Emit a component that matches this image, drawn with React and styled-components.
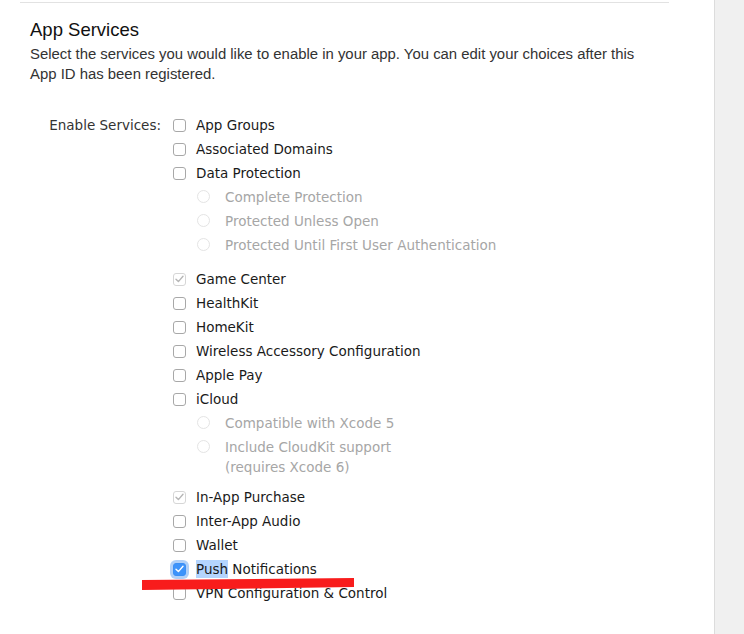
import React from "react";
import styled, { createGlobalStyle } from "styled-components";

const GlobalStyle = createGlobalStyle`
  html, body {
    margin: 0;
    padding: 0;
    background: #ffffff;
  }
`;

const Page = styled.div`
  position: relative;
  display: flex;
  width: 744px;
  height: 634px;
  overflow: hidden;
`;

const Main = styled.div`
  width: 715px;
  flex-shrink: 0;
  border-right: 1px solid #dcdcdc;
  padding-top: 2px;
  box-sizing: border-box;
`;

const Sidebar = styled.div`
  flex: 1;
  background: #f0f0f0;
`;

const Rule = styled.div`
  margin-left: 20px;
  width: 649px;
  border-top: 1px solid #e2e2e2;
`;

const Section = styled.section`
  padding-left: 30px;
  padding-top: 14px;
`;

const Heading = styled.h2`
  margin: 0;
  font-family: "Liberation Sans", Arial, sans-serif;
  font-weight: normal;
  font-size: 18.5px;
  line-height: 26px;
  color: #111;
`;

const Description = styled.p`
  margin: 1px 0 0;
  width: 616px;
  font-family: "Liberation Sans", Arial, sans-serif;
  font-size: 14.9px;
  line-height: 20px;
  color: #333;
`;

const Form = styled.div`
  display: grid;
  grid-template-columns: 131px 1fr;
  column-gap: 12px;
  margin-top: 29px;
  font-family: "DejaVu Sans", "Lucida Grande", sans-serif;
  font-size: 13.5px;
`;

const FieldLabel = styled.div`
  text-align: right;
  height: 24px;
  line-height: 24px;
  color: #333;
`;

const Options = styled.div`
  display: flex;
  flex-direction: column;
`;

const Row = styled.label`
  display: flex;
  align-items: center;
  gap: 10px;
  height: 24px;
  color: #1a1a1a;
`;

const Box = styled.span`
  width: 13px;
  height: 13px;
  box-sizing: border-box;
  border-radius: 3px;
  border: 1px solid ${(p) => (p.$checked ? "#3b8ff5" : p.$disabled ? "#d6d6d6" : "#a8a8a8")};
  background: ${(p) => (p.$checked ? "#3d93fa" : "#fff")};
  box-shadow: ${(p) => (p.$focus ? "0 0 0 3px rgba(80, 150, 240, 0.45)" : "none")};
  flex-shrink: 0;
  display: flex;
  align-items: center;
  justify-content: center;
`;

const Text = styled.span`
  white-space: nowrap;
`;

const Selected = styled.span`
  background: #b4d5fe;
  padding: 1px 0;
`;

const SubGroup = styled.div`
  display: flex;
  flex-direction: column;
  padding-left: 24px;
  margin-bottom: ${(p) => p.$after || 10}px;
`;

const RadioRow = styled.div`
  display: flex;
  align-items: flex-start;
  gap: 15px;
  min-height: 24px;
  color: #a6a6a6;
`;

const Radio = styled.span`
  width: 13px;
  height: 13px;
  margin-top: 5px;
  box-sizing: border-box;
  border-radius: 50%;
  border: 1px solid #e4e4e4;
  background: #fff;
  flex-shrink: 0;
`;

const RadioText = styled.span`
  line-height: 20px;
  padding-top: 2px;
`;

const Overlay = styled.svg`
  position: absolute;
  left: 0;
  top: 0;
  pointer-events: none;
`;

const Check = ({ color }) => (
  <svg width="9" height="8" viewBox="0 0 9 8">
    <path d="M1 4.3 L3.4 6.6 L8 1.2" fill="none" stroke={color} strokeWidth="1.4" strokeLinecap="round" strokeLinejoin="round" />
  </svg>
);

const Checkbox = ({ checked, disabled, focus }) => (
  <Box $checked={checked && !disabled} $disabled={disabled} $focus={focus}>
    {checked && <Check color={disabled ? "#b5b5b5" : "#fff"} />}
  </Box>
);

const Option = ({ label, checked, disabled, focus, children }) => (
  <Row>
    <Checkbox checked={checked} disabled={disabled} focus={focus} />
    <Text>{children || label}</Text>
  </Row>
);

const RadioOption = ({ children }) => (
  <RadioRow>
    <Radio />
    <RadioText>{children}</RadioText>
  </RadioRow>
);

export default function App() {
  return (
    <>
      <GlobalStyle />
      <Page>
        <Main>
          <Rule />
          <Section>
            <Heading>App Services</Heading>
            <Description>
              Select the services you would like to enable in your app. You can edit your choices after this App ID
              has been registered.
            </Description>
            <Form>
              <FieldLabel>Enable Services:</FieldLabel>
              <Options>
                <Option label="App Groups" />
                <Option label="Associated Domains" />
                <Option label="Data Protection" />
                <SubGroup>
                  <RadioOption>Complete Protection</RadioOption>
                  <RadioOption>Protected Unless Open</RadioOption>
                  <RadioOption>Protected Until First User Authentication</RadioOption>
                </SubGroup>
                <Option label="Game Center" checked disabled />
                <Option label="HealthKit" />
                <Option label="HomeKit" />
                <Option label="Wireless Accessory Configuration" />
                <Option label="Apple Pay" />
                <Option label="iCloud" />
                <SubGroup $after={8}>
                  <RadioOption>Compatible with Xcode 5</RadioOption>
                  <RadioOption>
                    Include CloudKit support
                    <br />
                    (requires Xcode 6)
                  </RadioOption>
                </SubGroup>
                <Option label="In-App Purchase" checked disabled />
                <Option label="Inter-App Audio" />
                <Option label="Wallet" />
                <Option checked focus>
                  <Selected>Push</Selected> Notifications
                </Option>
                <Option label="VPN Configuration &amp; Control" />
              </Options>
            </Form>
          </Section>
        </Main>
        <Sidebar />
        <Overlay width="744" height="634">
          <polygon points="142,580 354,578 354,587 142,590" fill="#f81c1c" />
        </Overlay>
      </Page>
    </>
  );
}
